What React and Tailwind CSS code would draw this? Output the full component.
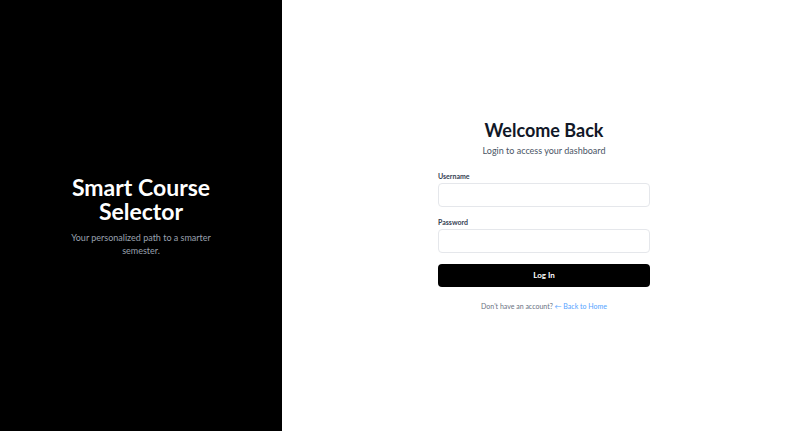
export default function App() {
  return (
    <div className="flex h-[431px] w-[806px] overflow-hidden" style={{ fontFamily: 'Lato, "Noto Sans", sans-serif' }}>
      <div className="flex w-[282px] shrink-0 flex-col items-center justify-center bg-black px-6 text-center">
        <h1 className="text-[23px] font-bold leading-[24px] text-white">Smart Course<br />Selector</h1>
        <p className="mt-[8px] w-[140px] text-[9px] leading-[13px] text-gray-400">Your personalized path to a smarter semester.</p>
      </div>
      <div className="flex flex-1 items-center justify-center bg-white">
        <div className="w-[212px] -mt-[3px]">
          <div className="text-center">
            <h2 className="text-[18px] font-bold leading-[24px] text-[#111827]">Welcome Back</h2>
            <p className="mt-[3px] text-[9px] leading-[12px] text-gray-600">Login to access your dashboard</p>
          </div>
          <div className="mt-[14px]">
            <label className="block text-[7px] font-bold leading-[10px] text-gray-700">Username</label>
            <input className="mt-[2px] block h-[24px] w-full rounded-[4px] border border-gray-200 bg-white outline-none" />
          </div>
          <div className="mt-[10px]">
            <label className="block text-[7px] font-bold leading-[10px] text-gray-700">Password</label>
            <input type="password" className="mt-[2px] block h-[24px] w-full rounded-[4px] border border-gray-200 bg-white outline-none" />
          </div>
          <button className="mt-[11px] flex h-[23px] w-full items-center justify-center rounded-[4px] bg-black text-[8px] font-bold text-white">Log In</button>
          <p className="mt-[14px] text-center text-[7px] leading-[10px] text-gray-500">
            Don't have an account? <span className="text-blue-400">← Back to Home</span>
          </p>
        </div>
      </div>
    </div>
  );
}
